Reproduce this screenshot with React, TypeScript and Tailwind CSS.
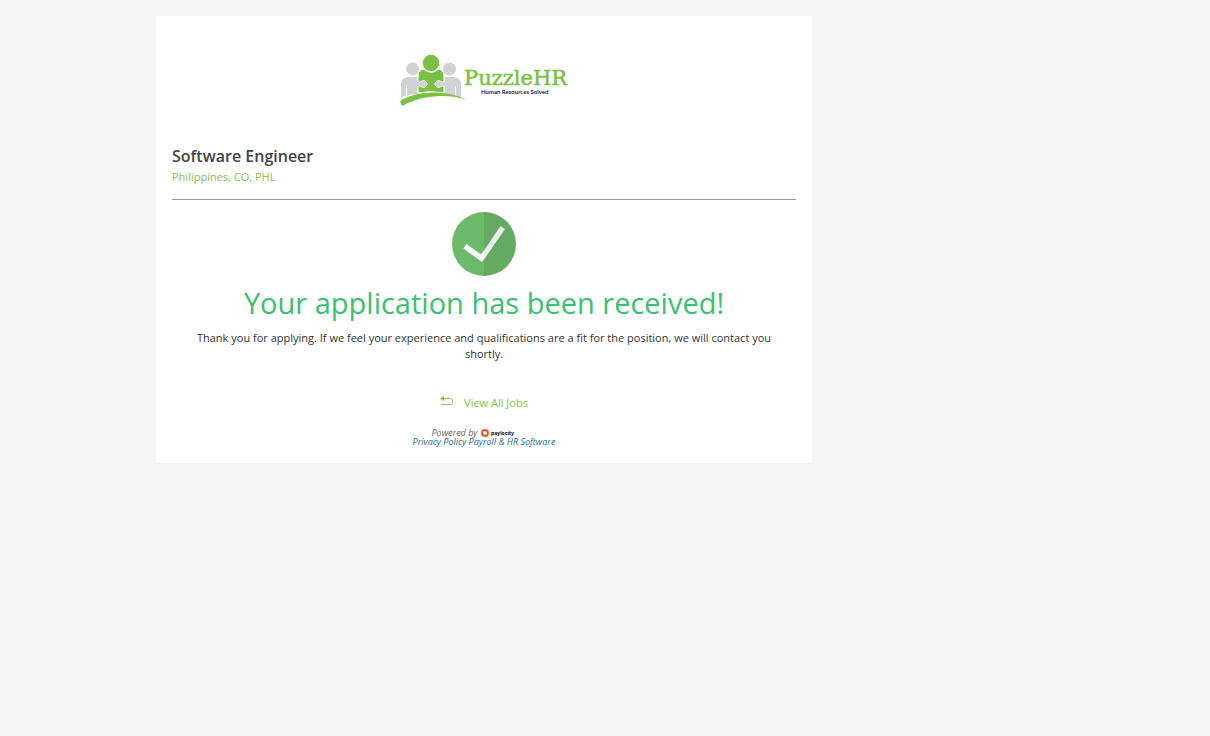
const COLORS = {
  brandGreen: '#7ac143',
  brandGray: '#d0d2d3',
  brandNavy: '#2b2350',
};

const PuzzleLogo = () => (
  <svg width="168" height="54" viewBox="0 0 168 54" role="img" aria-label="PuzzleHR Human Resources Solved">
    {/* Side figures */}
    <g fill={COLORS.brandGray}>
      <circle cx="12.5" cy="15" r="6.500" />
      <circle cx="49.5" cy="15" r="6.500" />
      <path d="M1 43V31q0-8 8-8h10v18q-7-1-12 .5V32H6v9.500z" />
      <path d="M61 43V31q0-8-8-8H43v18q7 .3 12 1.500V32h1v11z" />
    </g>

    {/* Middle figure with the puzzle joints */}
    <path
      d="M18 39V22q0-7 7-7h12q7 0 7 7v17q-13-3-26 0z"
      fill={COLORS.brandGreen}
      stroke="#fff"
      strokeWidth="1"
    />
    <circle cx="31" cy="9" r="9" fill={COLORS.brandGreen} stroke="#fff" strokeWidth="1.500" />
    <g fill={COLORS.brandGray} stroke="#fff" strokeWidth="1">
      <path d="M17 27q3 2 4 .5c3-2 6 0 6 2.500s-3 4.500-6 2.500q-1-1.500-4 .5" />
      <path d="M45 27q-3 2-4 .5c-3-2-6 0-6 2.500s3 4.500 6 2.500q1-1.500 4 .5" />
    </g>

    {/* Swoosh */}
    <path d="M0 47C15 37 44 35 66 45.500 44 39 20 42 2 52z" fill={COLORS.brandGreen} />

    <text
      x="64"
      y="31"
      fontSize="21"
      fill={COLORS.brandGreen}
      stroke={COLORS.brandGreen}
      strokeWidth="0.5"
      style={{ fontFamily: '"DejaVu Serif", serif' }}
    >
      PuzzleHR
    </text>
    <text x="81" y="40" fontSize="6" fontWeight="700" fill={COLORS.brandNavy} style={{ fontFamily: 'Lato, sans-serif' }}>
      Human Resources Solved
    </text>
  </svg>
);

const CheckBadge = () => (
  <svg width="64" height="64" viewBox="0 0 64 64" aria-hidden="true">
    <path d="M32 0a32 32 0 0 0 0 64z" fill="#6dbb6a" />
    <path d="M32 0a32 32 0 0 1 0 64z" fill="#64ab61" />
    <path d="M14.500 32L29 42.500 32 38.500V47.500L30 50 11.500 36.500z" fill="#fff" />
    <path d="M32 38.500L48.500 14 53 17 32 47.500z" fill="#ececec" />
  </svg>
);

const ReturnIcon = () => (
  <svg className="mt-0.5" width="14" height="10" viewBox="0 0 14 10" fill="none" aria-hidden="true">
    <path d="M3 2.500h7.500q2 0 2 2v2q0 2-2 2H1" stroke="#8cc657" />
    <path d="M0 2.500L4 0v5z" fill="#7ac143" />
  </svg>
);

const PaylocityLogo = () => (
  <svg className="not-italic" width="56" height="9" viewBox="0 0 56 9" role="img" aria-label="paylocity">
    <circle cx="4" cy="5" r="3" fill="none" stroke="#ed4b23" strokeWidth="2" />
    <path d="M4 1l2 1M8 5l-1 2M4 9L2 8M0 5l1-2" stroke="#f9a06f" strokeWidth="1" />
    <text x="10" y="7" fontSize="5" fontWeight="800" fill="#1f2430" style={{ fontFamily: 'Inter, sans-serif' }}>
      paylocity
    </text>
  </svg>
);

const App = () => {
  return (
    <div className="min-h-screen bg-[#f5f5f5] py-4" style={{ fontFamily: '"Open Sans", sans-serif' }}>
      <div className="w-4/5">
        <main className="mx-auto max-w-[656px] bg-white px-4 pt-[38px] pb-[17px]">
          <header className="flex justify-center">
            <PuzzleLogo />
          </header>

          {/* Job details */}
          <section className="mt-9 border-b border-[#999] pb-[13px]">
            <h1 className="text-base leading-6 font-semibold text-[#444]">Software Engineer</h1>
            <p className="text-[11px] leading-[18px] text-[#83c24b]">Philippines, CO, PHL</p>
          </section>

          {/* Confirmation */}
          <section className="mt-3 flex flex-col items-center text-center">
            <CheckBadge />
            <h2 className="mt-[7px] text-[29px] leading-10 text-[#3dbf70]">Your application has been received!</h2>
            <p className="mt-[7px] px-4 text-[11px] leading-4 text-[#333]">
              Thank you for applying. If we feel your experience and qualifications are a fit for the position, we will
              contact you shortly.
            </p>
            <a href="#jobs" className="mt-8 flex gap-[10px] text-[11px] leading-[18px] text-[#83c24b]">
              <ReturnIcon />
              View All Jobs
            </a>
          </section>

          <footer className="mt-4 text-center text-[9px] leading-[9px] text-[#1c6a8c] italic">
            <div className="flex justify-center gap-[3px]">
              <span className="text-[#666]">Powered by</span>
              <PaylocityLogo />
            </div>
            <a href="#privacy">Privacy Policy</a> <a href="#payroll">Payroll &amp; HR Software</a>
          </footer>
        </main>
      </div>
    </div>
  );
};

export default App;
